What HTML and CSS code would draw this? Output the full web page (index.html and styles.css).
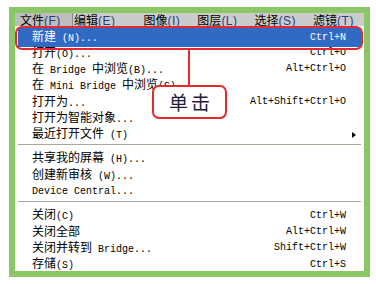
FILE: index.html
```html
<!DOCTYPE html>
<html lang="zh-CN">

<head>
    <meta charset="UTF-8">
    <meta name="viewport" content="width=device-width, initial-scale=1.0">
    <title>文件菜单</title>
    <link rel="stylesheet" href="styles.css">
</head>

<body>
    <div class="frame">
        <div class="menubar">
            <span class="top active"><span class="zh">文件</span><u>(F)</u></span>
            <span class="top"><span class="zh">编辑</span><u>(E)</u></span>
            <span class="top wide"><span class="zh">图像</span><u>(I)</u></span>
            <span class="top"><span class="zh">图层</span><u>(L)</u></span>
            <span class="top"><span class="zh">选择</span><u>(S)</u></span>
            <span class="top"><span class="zh">滤镜</span><u>(T)</u></span>
        </div>

        <div class="menu">
            <div class="item selected"><span><span class="zh">新建</span> (N)...</span><span>Ctrl+N</span></div>
            <div class="item"><span><span class="zh">打开</span>(O)...</span><span>Ctrl+O</span></div>
            <div class="item"><span><span class="zh">在</span> Bridge <span class="zh">中浏览</span>(B)...</span><span>Alt+Ctrl+O</span></div>
            <div class="item"><span><span class="zh">在</span> Mini Bridge <span class="zh">中浏览</span>(G)...</span><span></span></div>
            <div class="item"><span><span class="zh">打开为</span>...</span><span>Alt+Shift+Ctrl+O</span></div>
            <div class="item"><span><span class="zh">打开为智能对象</span>...</span><span></span></div>
            <div class="item"><span><span class="zh">最近打开文件</span> (T)</span><span class="arrow"></span></div>
            <div class="sep"></div>
            <div class="item"><span><span class="zh">共享我的屏幕</span> (H)...</span><span></span></div>
            <div class="item"><span><span class="zh">创建新审核</span> (W)...</span><span></span></div>
            <div class="item"><span>Device Central...</span><span></span></div>
            <div class="sep"></div>
            <div class="item"><span><span class="zh">关闭</span>(C)</span><span>Ctrl+W</span></div>
            <div class="item"><span><span class="zh">关闭全部</span></span><span>Alt+Ctrl+W</span></div>
            <div class="item"><span><span class="zh">关闭并转到</span> Bridge...</span><span>Shift+Ctrl+W</span></div>
            <div class="item"><span><span class="zh">存储</span>(S)</span><span>Ctrl+S</span></div>
        </div>

        <!-- annotation drawn over the menu -->
        <div class="ring"></div>
        <div class="pointer"></div>
        <div class="callout">单击</div>
    </div>
</body>

</html>
```

FILE: styles.css
```css
body {
    margin: 0;
    background: #fff;
    font-family: "Liberation Mono", "Noto Sans CJK SC", monospace;
    font-size: 10px;
    color: #000;
}

.zh {
    font-family: "Noto Sans CJK SC", sans-serif;
    font-size: 12px;
}

.frame {
    position: relative;
    box-sizing: border-box;
    width: 361px;
    height: 270px;
    margin: 7px 0 0 9px;
    border: 6px solid #8bc766;
    background: #fff;
    overflow: hidden;
}

.menubar {
    display: flex;
    gap: 17px;
    height: 13px;
    line-height: 13px;
    background: #cbcbcb;
}

.top {
    white-space: nowrap;
}

.top u {
    font-family: "Liberation Sans", sans-serif;
    font-size: 12px;
    letter-spacing: 0.5px;
    text-decoration: none;
    color: #2a3c86;
}

.top.active {
    width: 52px;
    padding-left: 5px;
    margin-right: -16px;
    border-right: 1px solid #8a8a8a;
    background: #bdbdbd;
}

.top.wide {
    margin-left: 11px;
}

.menu {
    padding: 1px 3px 0;
}

.item {
    display: flex;
    justify-content: space-between;
    align-items: center;
    height: 16.3px;
    line-height: 14px;
    padding: 0 15px 0 14px;
    white-space: nowrap;
}

.item.selected {
    height: 19px;
    margin: 1px 0 -2px;
    background: #316ac5;
    color: #fff;
}

.arrow {
    width: 0;
    height: 0;
    margin-right: -10px;
    border-left: 4px solid #000;
    border-top: 3px solid transparent;
    border-bottom: 3px solid transparent;
}

.sep {
    height: 1px;
    margin: 1px 0 6px;
    background: #aca899;
}

.ring {
    position: absolute;
    left: 0;
    top: 13px;
    box-sizing: border-box;
    width: 348px;
    height: 24px;
    border: 2px solid #e42a2f;
    border-radius: 7px;
}

.pointer {
    position: absolute;
    left: 173px;
    top: 37px;
    width: 2px;
    height: 35px;
    background: #e42a2f;
}

.callout {
    position: absolute;
    left: 137px;
    top: 72px;
    box-sizing: border-box;
    width: 75px;
    height: 34px;
    padding-left: 3px;
    border: 2px solid #e42a2f;
    border-radius: 7px;
    background: #fff;
    font-family: "Noto Sans CJK SC", sans-serif;
    font-size: 19px;
    line-height: 30px;
    letter-spacing: 3px;
    text-align: center;
    color: #1c1c36;
}
```
